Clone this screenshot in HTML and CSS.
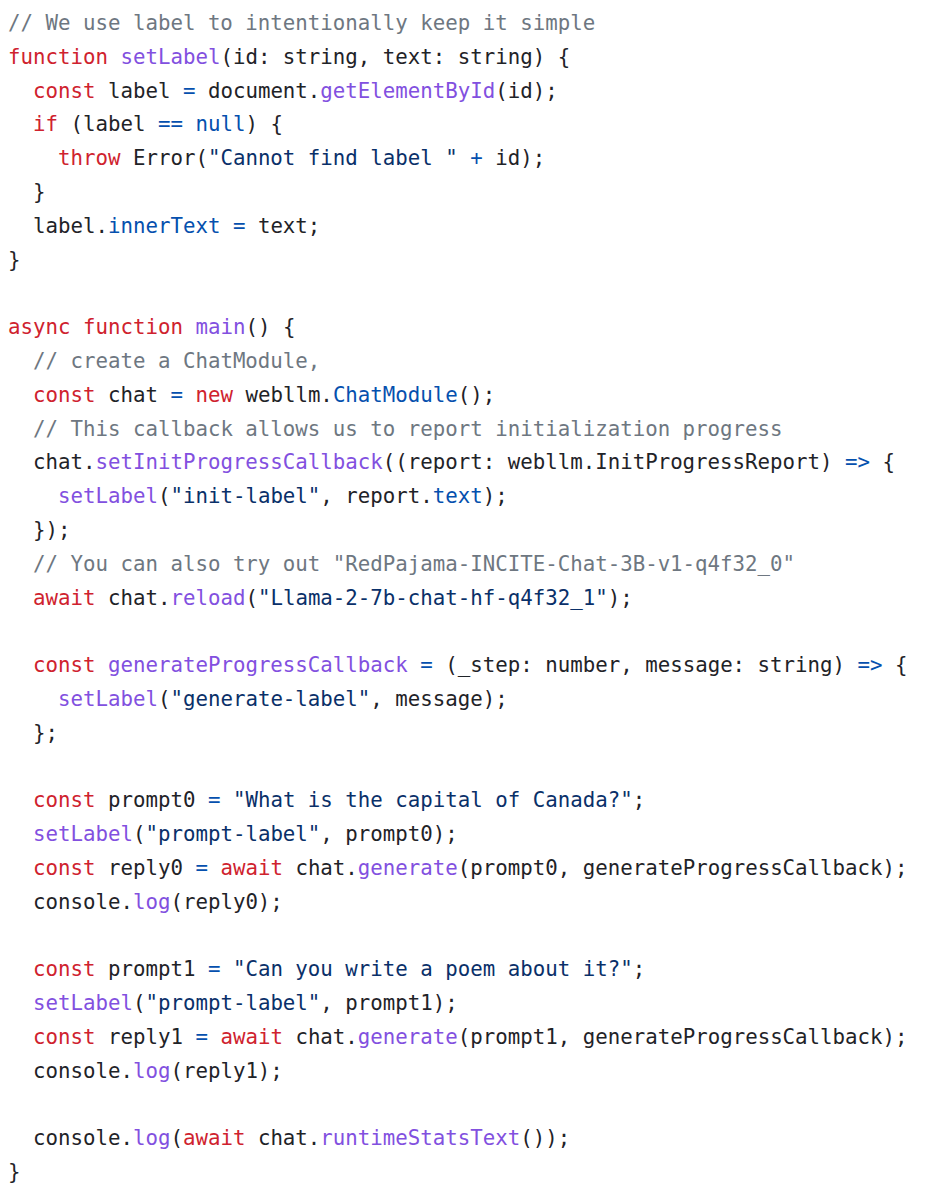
FILE: index.html
```html
<!DOCTYPE html>
<html>
<head>
<meta charset="utf-8">
<link rel="stylesheet" href="styles.css">
</head>
<body>
<pre class="code"><span class="c">// We use label to intentionally keep it simple</span>
<span class="k">function</span> <span class="f">setLabel</span>(id: string, text: string) {
  <span class="k">const</span> label <span class="o">=</span> document.<span class="f">getElementById</span>(id);
  <span class="k">if</span> (label <span class="o">==</span> <span class="o">null</span>) {
    <span class="k">throw</span> Error(<span class="s">"Cannot find label "</span> <span class="o">+</span> id);
  }
  label.<span class="o">innerText</span> <span class="o">=</span> text;
}

<span class="k">async</span> <span class="k">function</span> <span class="f">main</span>() {
  <span class="c">// create a ChatModule,</span>
  <span class="k">const</span> chat <span class="o">=</span> <span class="k">new</span> webllm.<span class="o">ChatModule</span>();
  <span class="c">// This callback allows us to report initialization progress</span>
  chat.<span class="f">setInitProgressCallback</span>((report: webllm.InitProgressReport) <span class="o">=&gt;</span> {
    <span class="f">setLabel</span>(<span class="s">"init-label"</span>, report.<span class="o">text</span>);
  });
  <span class="c">// You can also try out "RedPajama-INCITE-Chat-3B-v1-q4f32_0"</span>
  <span class="k">await</span> chat.<span class="f">reload</span>(<span class="s">"Llama-2-7b-chat-hf-q4f32_1"</span>);

  <span class="k">const</span> <span class="f">generateProgressCallback</span> <span class="o">=</span> (_step: number, message: string) <span class="o">=&gt;</span> {
    <span class="f">setLabel</span>(<span class="s">"generate-label"</span>, message);
  };

  <span class="k">const</span> prompt0 <span class="o">=</span> <span class="s">"What is the capital of Canada?"</span>;
  <span class="f">setLabel</span>(<span class="s">"prompt-label"</span>, prompt0);
  <span class="k">const</span> reply0 <span class="o">=</span> <span class="k">await</span> chat.<span class="f">generate</span>(prompt0, generateProgressCallback);
  console.<span class="f">log</span>(reply0);

  <span class="k">const</span> prompt1 <span class="o">=</span> <span class="s">"Can you write a poem about it?"</span>;
  <span class="f">setLabel</span>(<span class="s">"prompt-label"</span>, prompt1);
  <span class="k">const</span> reply1 <span class="o">=</span> <span class="k">await</span> chat.<span class="f">generate</span>(prompt1, generateProgressCallback);
  console.<span class="f">log</span>(reply1);

  console.<span class="f">log</span>(<span class="k">await</span> chat.<span class="f">runtimeStatsText</span>());
}</pre>
</body>
</html>
```

FILE: styles.css
```css
html, body {
  margin: 0;
  padding: 0;
  background: #ffffff;
}
.code {
  margin: 0;
  padding: 7px 0 0 8px;
  font-family: "DejaVu Sans Mono", "Liberation Mono", monospace;
  font-size: 20.75px;
  line-height: 33.8px;
  color: #1f2328;
  white-space: pre;
}
.c { color: #6e7781; }
.k { color: #cf222e; }
.f { color: #8250df; }
.s { color: #0a3069; }
.o { color: #0550ae; }
```
